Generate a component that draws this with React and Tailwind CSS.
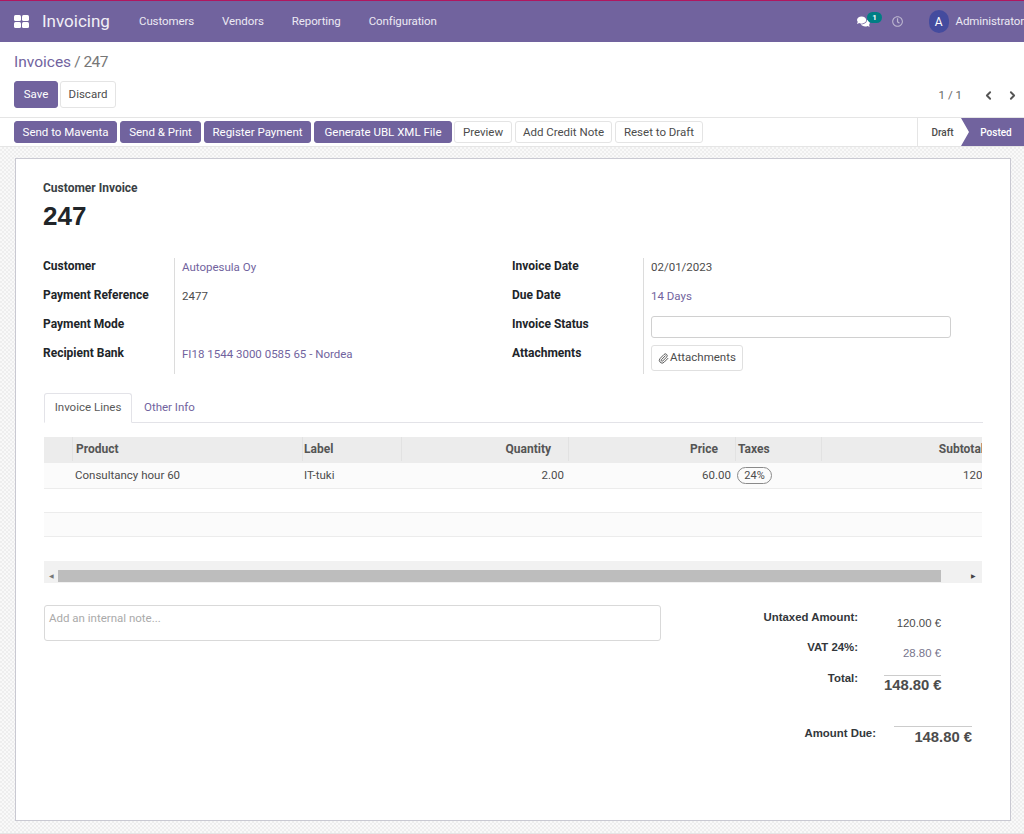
import React from "react";
import { ChevronLeft, ChevronRight, Paperclip } from "lucide-react";
import { FaComments, FaRegClock } from "react-icons/fa";

const P = "bg-[#71639e] text-white border-[#71639e]";
const S = "bg-white text-[#4c4c4c] border-[#e4e4e4]";
const LABEL = "w-[132px] font-bold text-[#212529] text-[12px] leading-[16px] border-r border-[#dcdcdc]";

function Btn({ primary, children, w }) {
  return <button className={`h-[22px] border rounded-[3px] pt-[1px] text-[11.5px] flex items-center justify-center whitespace-nowrap ${primary ? P : S} ${w}`}>{children}</button>;
}

function Field({ label, value, valueCls }) {
  return (
    <div className="flex h-[29px]">
      <div className={LABEL}>{label}</div>
      <div className={`pl-[7px] text-[11.5px] leading-[18px] ${valueCls || "text-[#4c4c4c]"}`}>{value}</div>
    </div>
  );
}

const cols = "grid grid-cols-[29px_230px_99px_167px_167px_86px_180px]";
const heads = [
  ["", ""],
  ["Product", "pl-[3px]"],
  ["Label", "pl-[1px]"],
  ["Quantity", "justify-end pr-[17px]"],
  ["Price", "justify-end pr-[17px]"],
  ["Taxes", "pl-[2px]"],
  ["Subtotal", "justify-end pr-[18px]"],
];

export default function App() {
  return (
    <div className="w-[1024px] h-[834px] overflow-hidden bg-white flex flex-col font-['Roboto',sans-serif] text-[11.5px] text-[#4c4c4c]">
      <nav className="h-[42px] shrink-0 bg-[#71639e] border-t border-t-[#b0175f] flex items-center text-white overflow-hidden">
        <svg className="ml-[14px] w-[15px] h-[13px]" viewBox="0 0 15 13" fill="#fff">
          <rect x="0" y="0" width="7" height="6" rx="1.5" /><rect x="8" y="0" width="7" height="6" rx="1.5" />
          <rect x="0" y="7" width="7" height="6" rx="1.5" /><rect x="8" y="7" width="7" height="6" rx="1.5" />
        </svg>
        <span className="ml-[13px] text-[17px] text-[#f1eff6] w-[69px] whitespace-nowrap">Invoicing</span>
        <div className="flex ml-[28px] gap-[28px] text-[11.5px] tracking-[-0.1px] text-[#ece9f3]">
          <span>Customers</span><span>Vendors</span><span>Reporting</span><span>Configuration</span>
        </div>
        <div className="ml-auto flex items-center shrink-0 w-[167px] relative">
          <FaComments className="w-[15px] h-[13px] text-white" />
          <span className="absolute left-[10px] top-[2px] w-[15px] h-[11px] rounded-full bg-[#017e84] text-[8px] font-bold flex items-center justify-center">1</span>
          <FaRegClock className="ml-[22px] w-[13px] h-[13px] text-[#bdb7d0]" />
          <span className="ml-[26px] w-[23px] h-[23px] rounded-full bg-[#444b9e] flex items-center justify-center text-[12px]">A</span>
          <span className="ml-[7px] whitespace-nowrap text-[11.5px] tracking-[-0.1px] text-[#ece9f3]">Administrator</span>
        </div>
      </nav>

      <div className="h-[75px] shrink-0 px-[14px] relative">
        <div className="pt-[11px] text-[15.5px] leading-[19px]"><span className="text-[#71639e]">Invoices</span><span className="text-[#777] tracking-[-0.6px]"> / 247</span></div>
        <div className="flex gap-[2px] mt-[9px]">
          <button className={`h-[27px] w-[44px] rounded-[3px] border pt-[1px] text-[11.5px] ${P}`}>Save</button>
          <button className={`h-[27px] w-[56px] rounded-[3px] border pt-[1px] text-[11.5px] ${S}`}>Discard</button>
        </div>
        <div className="absolute right-[5px] top-[45px] flex items-center text-[#666] text-[11.5px]">
          <span>1 / 1</span>
          <ChevronLeft className="ml-[20px] w-[13px] h-[13px] text-[#555]" strokeWidth={3.5} />
          <ChevronRight className="ml-[11px] w-[13px] h-[13px] text-[#555]" strokeWidth={3.5} />
        </div>
      </div>

      <div className="h-[30px] shrink-0 border-y border-[#e5e5e5] flex items-center pl-[14px] gap-[3px]">
        <Btn primary w="w-[103px]">Send to Maventa</Btn>
        <Btn primary w="w-[81px]">Send &amp; Print</Btn>
        <Btn primary w="w-[107px]">Register Payment</Btn>
        <Btn primary w="w-[138px]">Generate UBL XML File</Btn>
        <Btn w="w-[58px] -ml-px">Preview</Btn>
        <Btn w="w-[97px]">Add Credit Note</Btn>
        <Btn w="w-[88px]">Reset to Draft</Btn>
        <div className="ml-auto h-full flex items-stretch text-[10px] font-medium">
          <div className="w-[44px] border-l border-[#e5e5e5] flex items-center justify-center pl-[6px] text-[#4c4c4c]">Draft</div>
          <div className="w-[63px] bg-[#71639e] text-white flex items-center justify-center pl-[7px] [clip-path:polygon(0_0,100%_0,100%_100%,0_100%,8px_50%)]">Posted</div>
        </div>
      </div>

      <div className="flex-1 bg-[#f4f4f4] bg-[repeating-conic-gradient(#eeeeee_0_25%,#f9f9f9_0_50%)] bg-[length:4px_4px] pt-[11px] pl-[15px] pb-[12px] border-b border-[#e5e5e5]">
        <div className="w-[996px] h-full bg-white border border-[#c9c9d2] pt-[21px] pl-[27px] flex flex-col">
          <div className="font-bold text-[#3a3f44] text-[12px] leading-[16px]">Customer Invoice</div>
          <div className="font-bold text-[#212529] text-[26px] leading-[30px] mt-[5px] font-['Liberation_Sans',sans-serif]">247</div>

          <div className="flex mt-[27px]">
            <div className="w-[469px]">
              <Field label="Customer" value="Autopesula Oy" valueCls="text-[#71639e]" />
              <Field label="Payment Reference" value="2477" />
              <Field label="Payment Mode" value="" />
              <Field label="Recipient Bank" value="FI18 1544 3000 0585 65 - Nordea" valueCls="text-[#71639e]" />
            </div>
            <div className="w-[460px]">
              <Field label="Invoice Date" value="02/01/2023" />
              <Field label="Due Date" value="14 Days" valueCls="text-[#71639e]" />
              <div className="flex h-[29px]">
                <div className={LABEL}>Invoice Status</div>
                <div className="pl-[7px]"><div className="w-[300px] h-[22px] border border-[#d0d0d0] rounded-[3px]" /></div>
              </div>
              <div className="flex h-[29px]">
                <div className={LABEL}>Attachments</div>
                <div className="pl-[7px]">
                  <div className="w-[92px] h-[26px] border border-[#e0e0e0] rounded-[3px] flex items-center justify-center text-[#4c4c4c]">
                    <Paperclip className="w-[11px] h-[11px] mr-[1px]" />Attachments
                  </div>
                </div>
              </div>
            </div>
          </div>

          <div className="w-[939px] ml-[1px] mt-[19px] h-[30px] border-b border-[#e3e3e8] flex">
            <div className="h-[30px] w-[88px] border border-[#e3e3e8] border-b-white rounded-t-[3px] flex items-center justify-center bg-white text-[#5a5a5a]">Invoice Lines</div>
            <div className="h-[30px] pl-[12px] flex items-center text-[#71639e]">Other Info</div>
          </div>

          <div className="w-[938px] ml-[1px] mt-[14px] overflow-hidden">
            <div className="w-[958px]">
              <div className={`${cols} h-[26px] bg-[#ececec] font-bold text-[#555] text-[12px]`}>
                {heads.map(([t, c], i) => (
                  <div key={i} className={`h-[24px] flex items-center ${i < 6 ? "border-r border-[#e2e2e2]" : ""} ${c}`}>{t}</div>
                ))}
              </div>
              <div className={`${cols} h-[26px] bg-[#fbfbfb] border-b border-[#ececec] items-center`}>
                <div />
                <div className="pl-[2px]">Consultancy hour 60</div>
                <div className="pl-[1px]">IT-tuki</div>
                <div className="text-right pr-[5px]">2.00</div>
                <div className="text-right pr-[5px]">60.00</div>
                <div className="pl-[1px]"><span className="inline-flex items-center justify-center w-[35px] h-[17px] rounded-full border border-[#8a8a8a] text-[11px]">24%</span></div>
                <div className="pl-[141px] whitespace-nowrap">120.00 €</div>
              </div>
              <div className="h-[24px] bg-white border-b border-[#ececec]" />
              <div className="h-[24px] bg-[#fbfbfb] border-b border-[#ececec]" />
              <div className="h-[24px] bg-white" />
            </div>
            <div className="h-[22px] bg-[#f1f1f1] flex items-end pb-[1px]">
              <span className="w-[14px] h-[12px] leading-[12px] text-center text-[#777] text-[6px]">◀</span>
              <div className="w-[883px] h-[12px] bg-[#bdbdbd]" />
              <span className="ml-auto w-[18px] h-[12px] leading-[12px] text-center text-[#444] text-[6px]">▶</span>
            </div>
          </div>

          <div className="flex mt-[22px] ml-[1px]">
            <div className="w-[617px] h-[36px] border border-[#d9d9d9] rounded-[3px] pl-[4px] pt-[4px] text-[#aaa]">Add an internal note...</div>
            <div className="w-[311px] font-['Liberation_Sans',sans-serif] relative pt-[4px]">
              <div className="grid grid-cols-[197px_83px] text-[11.4px] font-bold text-[#33373b]">
                <div className="text-right h-[30px]">Untaxed Amount:</div>
                <div className="text-right pt-[6px] font-normal text-[#4c4c4c]">120.00 €</div>
                <div className="text-right h-[30px]">VAT 24%:</div>
                <div className="text-right pt-[6px] font-normal text-[#77758c]">28.80 €</div>
                <div className="text-right h-[30px] pt-[1px]">Total:</div>
                <div className="border-t border-[#cccccc] text-right text-[14.8px] whitespace-nowrap leading-[18px] text-[#4c4c4c] mt-[6px] ml-[26px] h-[22px]">148.80 €</div>
              </div>
              <div className="grid grid-cols-[215px_96px] text-[11.4px] font-bold text-[#33373b] mt-[26px]">
                <div className="text-right">Amount Due:</div>
                <div className="border-t border-[#cccccc] text-right text-[14.8px] whitespace-nowrap leading-[18px] pt-[1px] text-[#4c4c4c] ml-[18px] mt-[1px]">148.80 €</div>
              </div>
            </div>
          </div>
        </div>
      </div>
    </div>
  );
}
